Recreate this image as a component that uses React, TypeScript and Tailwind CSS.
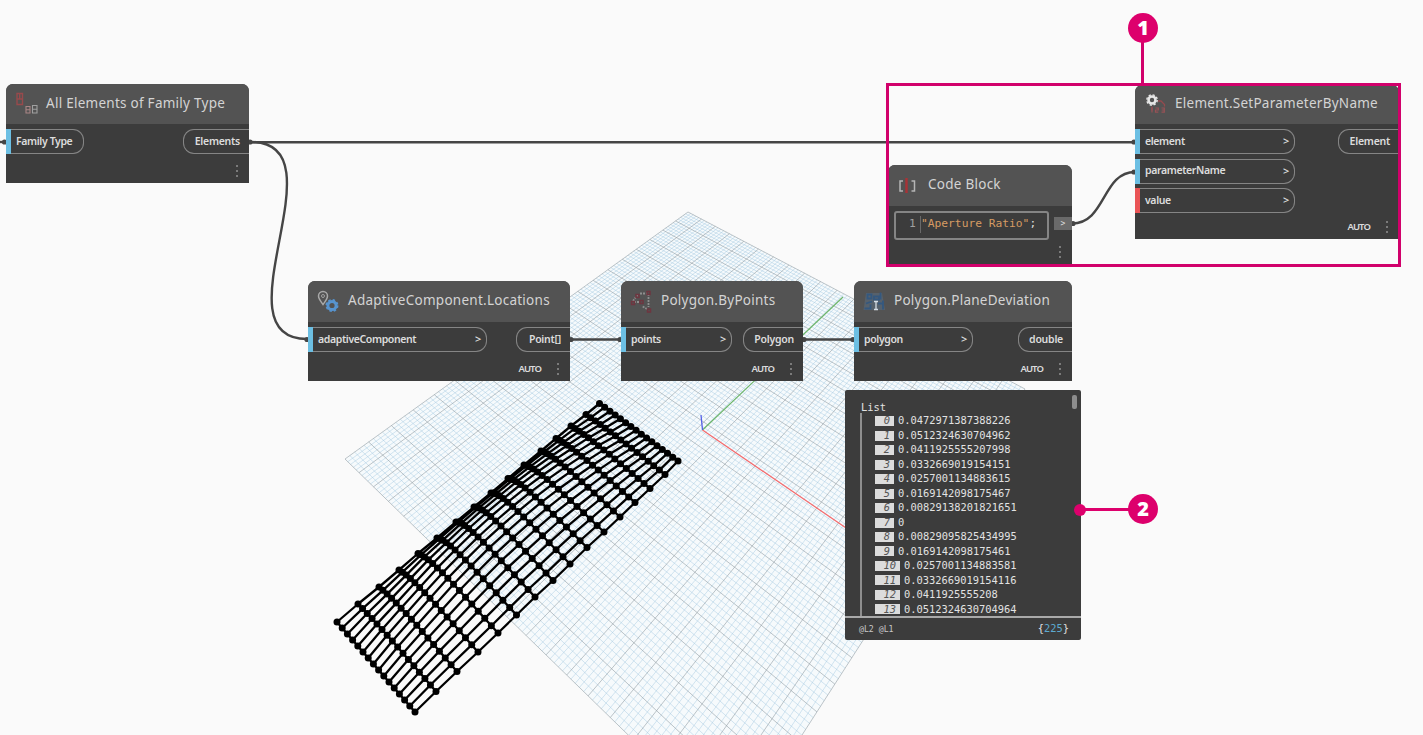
import type { ReactNode } from "react";

type Pt = [number, number];

/* ---------- background preview: ground grid ---------- */

const L: Pt = [345, 459];
const T: Pt = [688, 212];
const R: Pt = [1025, 389];
const B: Pt = [735, 839];

function makeProjection(p0: Pt, p1: Pt, p2: Pt, p3: Pt) {
  const dx1 = p1[0] - p2[0];
  const dx2 = p3[0] - p2[0];
  const sx = p0[0] - p1[0] + p2[0] - p3[0];
  const dy1 = p1[1] - p2[1];
  const dy2 = p3[1] - p2[1];
  const sy = p0[1] - p1[1] + p2[1] - p3[1];
  const det = dx1 * dy2 - dx2 * dy1;
  const g = (sx * dy2 - dx2 * sy) / det;
  const h = (dx1 * sy - sx * dy1) / det;
  const a = p1[0] - p0[0] + g * p1[0];
  const b = p3[0] - p0[0] + h * p3[0];
  const d = p1[1] - p0[1] + g * p1[1];
  const e = p3[1] - p0[1] + h * p3[1];
  return (u: number, v: number): Pt => {
    const w = g * u + h * v + 1;
    return [(a * u + b * v + p0[0]) / w, (d * u + e * v + p0[1]) / w];
  };
}

const project = makeProjection(L, T, R, B);

function segment(a: Pt, b: Pt) {
  return `M${a[0].toFixed(1)} ${a[1].toFixed(1)}L${b[0].toFixed(1)} ${b[1].toFixed(1)}`;
}

const minor: string[] = [];
const major: string[] = [];
for (let i = 0; i <= 100; i++) {
  const t = i / 100;
  const target = i % 5 === 0 ? major : minor;
  target.push(segment(project(t, 0), project(t, 1)), segment(project(0, t), project(1, t)));
}
const minorPath = minor.join("");
const majorPath = major.join("");
const outline = [L, T, R, B].map((p) => p.join(",")).join(" ");

/* ---------- background preview: adaptive panels ---------- */

const upper: Pt[] = [
  [337, 622], [358, 604], [379, 587], [399, 570], [418, 553.5], [437, 538], [456, 522], [474, 507],
  [491, 493], [508, 478.5], [524, 465], [541, 451], [556, 438.5], [571, 426], [586, 414.5], [599.5, 403.5],
];
const lower: Pt[] = [
  [415, 712], [436, 691.5], [457, 671.5], [478, 652], [498, 633], [516.5, 615], [535, 597], [553, 580.5],
  [570, 564], [587, 547.5], [604, 532], [620, 517], [635, 502.5], [650, 488.5], [665, 474.5], [678, 461],
];
const ease = (t: number, end: number, power: number) =>
  1 - end * (1 - t) + (end - 1) * Math.pow(1 - t, power);
const mesh: Pt[][] = upper.map((p, i) => {
  const q = lower[i];
  const s = Math.sin((Math.PI * i) / 15);
  return Array.from({ length: 16 }, (_, j): Pt => {
    const t = j / 15;
    return [
      p[0] + (q[0] - p[0]) * ease(t, 1 + 0.33 * s, 3),
      p[1] + (q[1] - p[1]) * ease(t, 1 + 0.52 * s, 3.2),
    ];
  });
});
const polyline = (pts: Pt[]) => "M" + pts.map((p) => `${p[0].toFixed(1)} ${p[1].toFixed(1)}`).join("L");
const meshPath = mesh.map(polyline).join("") + mesh[0].map((_, j) => polyline(mesh.map((r) => r[j]))).join("");

function Preview() {
  return (
    <svg className="absolute inset-0" width="1423" height="735" viewBox="0 0 1423 735" fill="none">
      <polygon points={outline} fill="#f6fafc" />
      <path d={minorPath} stroke="#9fc6df" strokeOpacity="0.55" strokeWidth="0.8" />
      <path d={majorPath} stroke="#8f9ba3" strokeOpacity="0.62" strokeWidth="0.95" />
      <path d="M702.500 430L843 297" stroke="#6db56b" strokeWidth="1.200" />
      <path d="M702.500 430L1000 633" stroke="#f4696b" strokeWidth="1.200" />
      <path d="M702.500 430L701 415" stroke="#5560e6" strokeWidth="1.300" />
      <path d={meshPath} stroke="#000" strokeWidth="2.300" strokeLinejoin="round" />
      {mesh.flat().map((p, i) => (
        <circle key={i} cx={p[0]} cy={p[1]} r="3.500" fill="#000" />
      ))}
    </svg>
  );
}

function Wires() {
  return (
    <svg className="absolute inset-0" width="1423" height="735" viewBox="0 0 1423 735" fill="none">
      <g stroke="#454545" strokeWidth="2.400">
        <path d="M0 142H6" />
        <path d="M249 142.300H1135" />
        <path d="M251 142C345 142 214 339 307 339" />
        <path d="M570 339.500H621" />
        <path d="M803 339.500H854" />
        <path d="M1072 223.500C1106 223.500 1102 172 1135 172" />
      </g>
      <g fill="#454545">
        <circle cx="4.500" cy="142" r="2.600" />
        <circle cx="250" cy="142" r="2.600" />
        <circle cx="1134" cy="142" r="2.600" />
        <circle cx="307" cy="339.500" r="2.600" />
        <circle cx="571" cy="339.500" r="2.600" />
        <circle cx="620" cy="339.500" r="2.600" />
        <circle cx="804" cy="339.500" r="2.600" />
        <circle cx="853" cy="339.500" r="2.600" />
        <circle cx="1073" cy="223.500" r="2.600" />
        <circle cx="1134" cy="172" r="2.600" />
      </g>
    </svg>
  );
}

/* ---------- node icons ---------- */

const FamilyIcon = () => (
  <svg width="24" height="24" viewBox="0 0 24 24" fill="none">
    <path d="M2 2.500h5.500v11h-5.500zM2 8h5.500M4.700 2.500v5.500" stroke="#984a4c" strokeWidth="1.400" />
    <path d="M11 15.500h4v6.500h-4zM11 18.700h4" stroke="#a98585" strokeWidth="1.100" />
    <path d="M17.500 14.500h4.500v7.500h-4.500zM17.500 18.200h4.500" stroke="#a0a0a0" strokeWidth="1.100" />
  </svg>
);

const LocationIcon = () => (
  <svg width="24" height="24" viewBox="0 0 24 24" fill="none">
    <path d="M6 15.500C3.500 12 1.500 9.700 1.500 7a4.500 4.500 0 0 1 9 0c0 2.700-2 5-4.500 8.500z" stroke="#a8a8a8" strokeWidth="1.500" />
    <circle cx="6" cy="7" r="1.500" stroke="#a0a0a0" />
    <circle cx="15" cy="16.500" r="4.100" stroke="#5794cf" strokeWidth="3" />
    <circle cx="15" cy="16.500" r="5.700" stroke="#5794cf" strokeWidth="1.600" strokeDasharray="2.400 2.080" />
  </svg>
);

const ByPointsIcon = () => (
  <svg width="24" height="24" viewBox="0 0 24 24" fill="none">
    <path d="M3 12L7.500 6M10 4.500h7M18.500 5v13M17 20l-5-3M4 13h6" stroke="#8f8f8f" strokeWidth="1.800" strokeDasharray="2 1" />
    <g stroke="#6e3640" strokeWidth="1.500">
      <path d="M6 5.500h3v3h-3zM17 2.500h3v3h-3zM1.500 12.500h3v3h-3zM10 11.500h3v3h-3zM17.500 20h3v3h-3z" />
    </g>
  </svg>
);

const DeviationIcon = () => (
  <svg width="24" height="24" viewBox="0 0 24 24" fill="none">
    <path d="M3 4h16l3 17H.5z" fill="#56616c" />
    <path d="M4.500 5.500h4v4h-4zM11 7.500h5v3h-5zM17.500 3.500v7M3 14.500l6-2M1.500 19.500h6v-4M15 14.500h5M20 11.500v9" stroke="#34587f" strokeWidth="1.800" />
    <path d="M11 12.500h4M13 12.500v8M11 20.500h4" stroke="#d5dde5" strokeWidth="1.300" />
  </svg>
);

const SetParameterIcon = () => (
  <svg width="24" height="24" viewBox="0 0 24 24" fill="none">
    <circle cx="8" cy="8" r="3.500" stroke="#e6e6e6" strokeWidth="2.600" />
    <circle cx="8" cy="8" r="5.200" stroke="#e6e6e6" strokeWidth="1.400" strokeDasharray="2.200 1.880" />
    <path d="M14 9h3l3.500 3.500v2M8 14.500v4" stroke="#954a4e" strokeWidth="1.300" />
    <path d="M8 15.500v5M11.500 16h2.800v2h-2.800v2.200h2.800M17.500 16h2.800v4.200h-2.800M17.700 18h2.600" stroke="#985256" strokeWidth="1.200" />
  </svg>
);

const CodeBlockIcon = () => (
  <svg width="24" height="24" viewBox="0 0 24 24" fill="none">
    <path d="M6 8H3v10h3M14.500 8h3v10h-3" stroke="#b5b5b5" strokeWidth="1.500" />
    <path d="M9.500 5v15" stroke="#a93236" strokeWidth="2.400" />
  </svg>
);

/* ---------- node building blocks ---------- */

const Dots = () => (
  <div className="flex flex-col gap-[3px]">
    <i className="size-[2px] bg-[#7b7b7b]" />
    <i className="size-[2px] bg-[#7b7b7b]" />
    <i className="size-[2px] bg-[#7b7b7b]" />
  </div>
);

const Header = ({ icon, title, className = "h-[41px]" }: { icon: ReactNode; title: string; className?: string }) => (
  <div className={`flex shrink-0 items-center whitespace-nowrap bg-[#535353] pb-[2px] pl-[9px] text-[13.5px] font-normal tracking-[0.26px] text-[#d4d4d4] ${className}`}>
    <span className="flex w-[31px] shrink-0">{icon}</span>
    <span>{title}</span>
  </div>
);

const InPort = ({ label, width, color = "bg-[#6cbfe3]", arrow = true }: { label: string; width: string; color?: string; arrow?: boolean }) => (
  <div className={`flex h-[25px] items-center rounded-r-[11px] border border-l-0 border-[#858585] ${width}`}>
    <i className={`-my-px mr-[5px] h-[25px] w-[5px] shrink-0 ${color}`} />
    <span className="whitespace-nowrap">{label}</span>
    {arrow && <span className="ml-auto mr-[5px] text-[11px]">&gt;</span>}
  </div>
);

const OutPort = ({ label, width }: { label: string; width: string }) => (
  <div className={`flex h-[25px] items-center justify-end rounded-l-[11px] border border-r-0 border-[#858585] pr-[9px] pt-px tracking-[-0.25px] ${width}`}>
    {label}
  </div>
);

const Footer = ({ auto = true }: { auto?: boolean }) => (
  <div className="mt-auto flex h-[24px] shrink-0 items-center justify-end gap-[16px] pr-[11px] text-[9.5px]">
    {auto && <span className="tracking-[-0.9px]">AUTO</span>}
    <Dots />
  </div>
);

const Node = ({ place, children }: { place: string; children: ReactNode }) => (
  <section
    className={`absolute flex flex-col overflow-hidden rounded-t-[7px] bg-[#3c3c3c] font-['Noto_Sans',sans-serif] text-[10.5px] font-semibold tracking-[-0.38px] text-[#dcdcdc] ${place}`}
  >
    {children}
  </section>
);

/* ---------- list preview ---------- */

const values = [
  "0.0472971387388226", "0.0512324630704962", "0.0411925555207998", "0.0332669019154151",
  "0.0257001134883615", "0.0169142098175467", "0.00829138201821651", "0",
  "0.00829095825434995", "0.0169142098175461", "0.0257001134883581", "0.0332669019154116",
  "0.0411925555208", "0.0512324630704964",
];

const ListPreview = () => (
  <section className="absolute left-[845px] top-[390px] flex h-[250px] w-[236px] flex-col rounded-[2px] bg-[#3c3c3c] font-['DejaVu_Sans_Mono',monospace] text-[10.4px] text-[#e2e2e2]">
    <div className="flex h-[228px] justify-between overflow-hidden border-b-2 border-[#a9a9a9]">
      <div className="pl-[15px] pt-[11px]">
        <p className="h-[12px] pl-px leading-[13px]">List</p>
        <div className="border-l-2 border-[#8f8f8f] pl-[13px] pt-px">
          {values.map((value, i) => (
            <div key={i} className="flex h-[14.47px] items-center gap-1">
              <span className={`flex h-[10px] items-center justify-end bg-[#dcdcdc] pr-1 italic text-[#555] ${i < 10 ? "w-[19px]" : "w-[25px]"}`}>
                {i}
              </span>
              <span>{value}</span>
            </div>
          ))}
        </div>
      </div>
      <i className="mr-1 mt-[5px] h-[14px] w-[5px] rounded-[2px] bg-[#8d8d8d]" />
    </div>
    <div className="flex flex-1 items-center justify-between pl-[14px] pr-3">
      <span className="text-[8.2px] text-[#c8c8c8]">@L2 @L1</span>
      <span>
        {"{"}
        <span className="text-[#5da9cf]">225</span>
        {"}"}
      </span>
    </div>
  </section>
);

const Badge = ({ n, place }: { n: number; place: string }) => (
  <div className={`absolute flex size-[30px] items-center justify-center rounded-full bg-[#dd006c] font-['Noto_Sans',sans-serif] text-[20px] font-black text-white ${place}`}>
    {n}
  </div>
);

export default function App() {
  return (
    <main className="relative h-[735px] w-[1423px] overflow-hidden bg-[#fafafa]">
      <Preview />
      <Wires />

      <Node place="left-[6px] top-[84px] h-[99px] w-[243px]">
        <Header icon={<FamilyIcon />} title="All Elements of Family Type" className="h-[40px]" />
        <div className="mt-[5px] flex justify-between">
          <InPort label="Family Type" width="w-[78px]" arrow={false} />
          <OutPort label="Elements" width="w-[66px]" />
        </div>
        <Footer auto={false} />
      </Node>

      <Node place="left-[308px] top-[281px] h-[100px] w-[262px]">
        <Header icon={<LocationIcon />} title="AdaptiveComponent.Locations" />
        <div className="mt-[5px] flex justify-between">
          <InPort label="adaptiveComponent" width="w-[179px]" />
          <OutPort label="Point[]" width="w-[54px]" />
        </div>
        <Footer />
      </Node>

      <Node place="left-[621px] top-[281px] h-[100px] w-[182px]">
        <Header icon={<ByPointsIcon />} title="Polygon.ByPoints" />
        <div className="mt-[5px] flex justify-between">
          <InPort label="points" width="w-[111px]" />
          <OutPort label="Polygon" width="w-[60px]" />
        </div>
        <Footer />
      </Node>

      <Node place="left-[854px] top-[281px] h-[100px] w-[218px]">
        <Header icon={<DeviationIcon />} title="Polygon.PlaneDeviation" />
        <div className="mt-[5px] flex justify-between">
          <InPort label="polygon" width="w-[119px]" />
          <OutPort label="double" width="w-[54px]" />
        </div>
        <Footer />
      </Node>

      <Node place="left-[888px] top-[165px] h-[99px] w-[184px]">
        <Header icon={<CodeBlockIcon />} title="Code Block" />
        <div className="mt-[5px] flex items-center justify-between pl-[6px] font-['DejaVu_Sans_Mono',monospace] font-normal tracking-normal">
          <div className="flex h-[29px] w-[155px] items-center rounded-[3px] border-2 border-[#858585] pb-[2px] text-[11.25px]">
            <span className="ml-[13px] w-[12px] border-r border-[#6a6a6a] text-[#a0a0a0]">1</span>
            <span className="text-[#d69b63]">"Aperture Ratio"</span>
            <span>;</span>
          </div>
          <span className="-mt-[4px] flex h-[13px] w-[18px] items-center justify-center bg-[#6a6a6a] text-[8px]">&gt;</span>
        </div>
        <Footer auto={false} />
      </Node>

      <Node place="left-[1135px] top-[85px] h-[154px] w-[264px]">
        <Header icon={<SetParameterIcon />} title="Element.SetParameterByName" className="h-[39px]" />
        <div className="mt-[5px] flex items-start justify-between">
          <div className="flex flex-col gap-[4.5px]">
            <InPort label="element" width="w-[160px]" />
            <InPort label="parameterName" width="w-[160px]" />
            <InPort label="value" width="w-[160px]" color="bg-[#ea5456]" />
          </div>
          <OutPort label="Element" width="w-[61px]" />
        </div>
        <Footer />
      </Node>

      <ListPreview />

      <div className="absolute left-[886px] top-[83px] h-[184px] w-[515px] border-3 border-[#d1006b]" />
      <i className="absolute left-[1141px] top-[40px] h-[44px] w-[3px] bg-[#d1006b]" />
      <Badge n={1} place="left-[1128px] top-[13px]" />
      <i className="absolute left-[1080px] top-[508px] h-[3px] w-[52px] bg-[#dd006c]" />
      <i className="absolute left-[1074px] top-[504px] size-[12px] rounded-full bg-[#dd006c]" />
      <Badge n={2} place="left-[1128px] top-[494px]" />
    </main>
  );
}
